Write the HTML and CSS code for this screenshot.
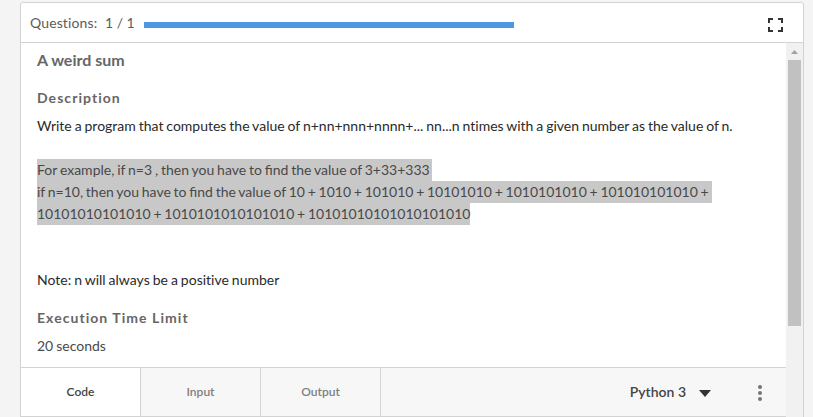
FILE: index.html
```html
<!DOCTYPE html>
<html lang="en">
<head>
<meta charset="utf-8">
<title>A weird sum</title>
<link rel="stylesheet" href="styles.css">
</head>
<body>
<main class="panel">
  <header class="header">
    <span class="count">Questions:</span>
    <span class="count-value">1 / 1</span>
    <div class="progress"></div>
    <svg class="fullscreen" width="15" height="14" viewBox="0 0 15 14"><path d="M1 5V1H5M10 1H14V5M14 9V13H10M5 13H1V9" fill="none" stroke="#333" stroke-width="2"/></svg>
  </header>
  <div class="body">
    <div class="main">
      <section class="content">
        <h1 class="title">A weird sum</h1>
        <h2 class="subtitle">Description</h2>
        <p class="text intro">Write a program that computes the value of n+nn+nnn+nnnn+... nn...n ntimes with a given number as the value of n.</p>
        <p class="text example"><mark class="l1">For example, if n=3 , then you have to <span class="lig">fi</span>nd the value of 3+33+333 </mark><br><mark class="l2">if n=10, then you have to <span class="lig">fi</span>nd the value of 10 + 1010 + 101010 + 10101010 + 1010101010 + 101010101010 + </mark><br><mark class="l3">10101010101010 + 1010101010101010 + 10101010101010101010</mark></p>
        <p class="text note">Note: n will always be a positive number</p>
        <h2 class="subtitle limit">Execution Time Limit</h2>
        <p class="text seconds">20 seconds</p>
      </section>
      <nav class="tabs">
        <div class="tab active">Code</div>
        <div class="tab">Input</div>
        <div class="tab">Output</div>
        <div class="tools">
          <span class="language">Python 3</span>
          <svg class="caret" width="12" height="7" viewBox="0 0 12 7"><path d="M0 0H12L6 7Z" fill="#333"/></svg>
          <svg class="more" width="4" height="16" viewBox="0 0 4 16" fill="#757575"><circle cx="2" cy="2" r="2"/><circle cx="2" cy="8" r="2"/><circle cx="2" cy="14" r="2"/></svg>
        </div>
      </nav>
    </div>
    <div class="scrollbar">
      <svg class="arrow" width="7" height="4" viewBox="0 0 7 4"><path d="M0 4L3.5 0L7 4Z" fill="#a3a3a3"/></svg>
      <div class="thumb"></div>
    </div>
  </div>
</main>
</body>
</html>
```
FILE: styles.css
```css
* { box-sizing: border-box; }
body {
  margin: 0;
  height: 417px;
  padding: 2px 9px 0 20px;
  overflow: hidden;
  background: #f4f4f4;
  font: 14px/22px Lato, sans-serif;
  font-variant-ligatures: none;
  color: #444;
}
.panel {
  width: 784px;
  height: 430px;
  border: 1px solid #d3d3d3;
  border-radius: 3px;
  background: #fff;
}
.header {
  display: flex;
  align-items: center;
  height: 40px;
  padding: 1px 20px 0 9px;
  border-bottom: 1px solid #d3d3d3;
  color: #5c5c5c;
  white-space: nowrap;
}
.count { width: 75px; letter-spacing: 0.12px; }
.count-value { width: 39px; }
.progress { width: 370px; height: 6px; margin-top: 4px; background: #4f97e2; }
.fullscreen { margin: 4px 0 0 auto; }
.body { display: flex; }
.main { width: 765px; }
.content { height: 324px; padding: 6px 0 0 16px; white-space: nowrap; }
.title { margin: 0; font-size: 16px; line-height: 22px; font-weight: 700; color: #666; }
.subtitle { margin: 16px 0 6px; font-size: 14px; line-height: 22px; font-weight: 700; letter-spacing: 1.05px; color: #666; }
.text { margin: 0; color: #2a2a2a; word-spacing: -0.6px; }
.lig { font-variant-ligatures: common-ligatures; }
.intro { word-spacing: -0.68px; }
.example { margin-top: 22px; }
mark { display: inline-block; height: 22px; background: #c8c8c8; color: #484848; white-space: pre; vertical-align: top; }
.l1 { width: 395px; word-spacing: -0.74px; }
.l2 { width: 675px; word-spacing: -0.84px; }
.l3 { width: 433px; word-spacing: -0.8px; }
.note { margin-top: 44px; }
.seconds { color: #4a4a4a; }
.tabs {
  display: flex;
  height: 50px;
  border-top: 1px solid #d3d3d3;
  border-bottom: 1px solid #d3d3d3;
  background: #f7f7f7;
}
.tab {
  width: 120px;
  border-right: 1px solid #d3d3d3;
  font-size: 12px;
  line-height: 48px;
  font-weight: 600;
  text-align: center;
  color: #808080;
}
.active { background: #fff; color: #444; }
.tools { flex: 1; display: flex; align-items: center; padding-right: 24px; }
.language { margin-left: auto; font-weight: 600; color: #444; }
.caret { margin: 2px 0 0 13px; }
.more { margin: 2px 0 0 47px; }
.scrollbar { width: 17px; height: 380px; background: #f1f1f1; display: flex; flex-direction: column; align-items: center; }
.arrow { margin: 7px 0 6px; }
.thumb { width: 13px; height: 266px; background: #c1c1c1; }
```
